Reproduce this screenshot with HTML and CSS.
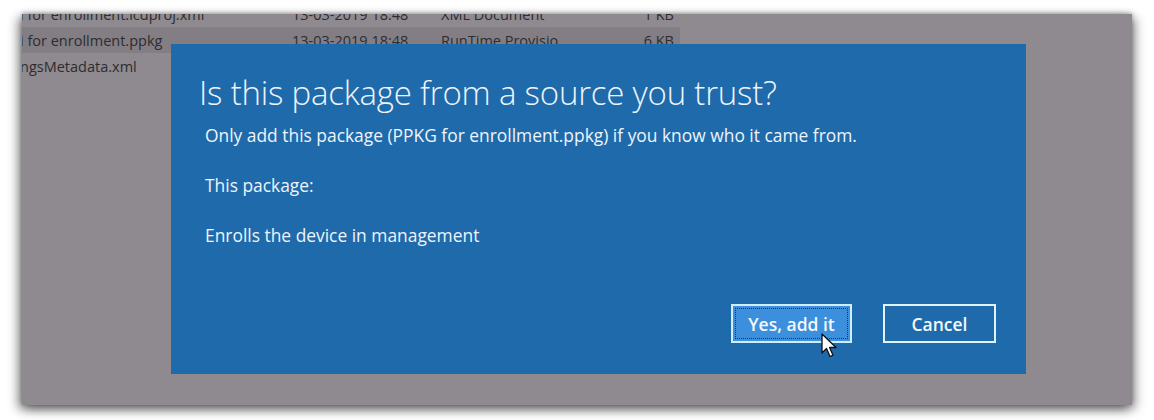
FILE: index.html
```html
<!DOCTYPE html>
<html>
<head>
<meta charset="utf-8">
<link rel="stylesheet" href="styles.css">
</head>
<body>
<div class="panel">
  <div class="list">
    <div class="row"><span class="name">l for enrollment.icdproj.xml</span><span class="date">13-03-2019 18:48</span><span class="type">XML Document</span><span class="size">1 KB</span></div>
    <div class="row sel"><span class="name">i for enrollment.ppkg</span><span class="date">13-03-2019 18:48</span><span class="type">RunTime Provisio...</span><span class="size">6 KB</span></div>
    <div class="row"><span class="name">ngsMetadata.xml</span><span class="date"></span><span class="type"></span><span class="size"></span></div>
  </div>
  <div class="dialog">
    <h1 class="title">Is this package from a source you trust?</h1>
    <p class="text">Only add this package (PPKG for enrollment.ppkg) if you know who it came from.</p>
    <p class="text gap">This package:</p>
    <p class="text gap">Enrolls the device in management</p>
    <div class="actions">
      <button class="btn primary"><span class="focus">Yes, add it</span></button>
      <button class="btn">Cancel</button>
    </div>
    <svg class="cursor" width="18" height="26" viewBox="0 0 18 26">
      <path d="M1 1 L1 20 L5.5 15.5 L9 23.5 L12 22.2 L8.6 14.5 L15 14.5 Z" fill="#fff" stroke="#111" stroke-width="1.3" stroke-linejoin="round"/>
    </svg>
  </div>
</div>
</body>
</html>
```
FILE: styles.css
```css
html, body {
  margin: 0;
  padding: 0;
  background: #ffffff;
}
body {
  width: 1154px;
  height: 420px;
  overflow: hidden;
  font-family: "Open Sans", "Noto Sans", sans-serif;
}
.panel {
  position: relative;
  margin: 14px 0 0 22px;
  width: 1110px;
  height: 391px;
  background: #8e8a8f;
  overflow: hidden;
  box-shadow: -4px 4px 10px rgba(0,0,0,0.45), 4px 4px 10px rgba(0,0,0,0.35), 0 -1px 4px rgba(0,0,0,0.25);
}
.list {
  margin-top: -13px;
  width: 658px;
}
.row {
  display: flex;
  align-items: center;
  height: 26px;
  font-size: 14.5px;
  color: #2e2c30;
  white-space: nowrap;
}
.row.sel {
  background: #827e83;
}
.name {
  width: 272px;
  overflow: hidden;
  margin-left: -2px;
}
.date {
  width: 149px;
}
.type {
  width: 170px;
}
.size {
  width: 63px;
  text-align: right;
}
.dialog {
  position: absolute;
  left: 149px;
  top: 30px;
  width: 855px;
  height: 330px;
  box-sizing: border-box;
  background: #1f6aab;
  padding: 28px 0 0 28px;
  color: #eef4fa;
}
.title {
  margin: 0;
  font-family: "Open Sans", sans-serif;
  font-weight: 300;
  font-size: 33px;
  line-height: 42px;
  letter-spacing: -0.2px;
}
.text {
  margin: 9px 0 0 6px;
  font-size: 17.4px;
  line-height: 24px;
  font-weight: 400;
}
.text.gap {
  margin-top: 26px;
}
.actions {
  display: flex;
  gap: 31px;
  margin: 57px 0 0 532px;
}
.btn {
  box-sizing: border-box;
  height: 39px;
  width: 113px;
  padding: 0;
  border: 2px solid #dff4ff;
  background: #1f6aab;
  color: #f4f8fc;
  font-family: "Open Sans", sans-serif;
  font-weight: 600;
  font-size: 17.5px;
  display: flex;
  align-items: center;
  justify-content: center;
}
.btn.primary {
  width: 121px;
  background: #3c8fdc;
  border-color: #cdeeff;
  padding: 2px;
}
.focus {
  flex: 1;
  align-self: stretch;
  display: flex;
  align-items: center;
  justify-content: center;
  border: 1px dotted #1b2f45;
}
.cursor {
  position: absolute;
  left: 650px;
  top: 289px;
}
```
